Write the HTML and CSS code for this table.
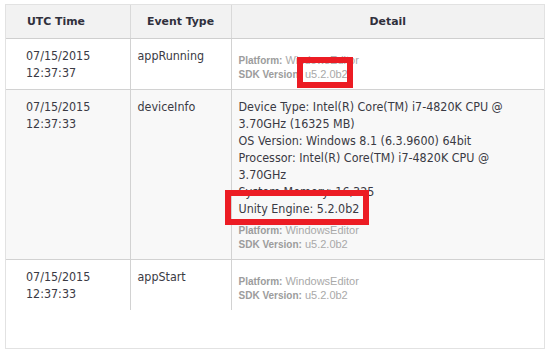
FILE: index.html
```html
<!DOCTYPE html>
<html>
<head>
<meta charset="utf-8">
<link rel="stylesheet" href="styles.css">
</head>
<body>
<div class="panel">
  <table class="events">
    <thead>
      <tr>
        <th class="c-time">UTC Time</th>
        <th class="c-type">Event Type</th>
        <th class="c-detail">Detail</th>
      </tr>
    </thead>
    <tbody>
      <tr>
        <td class="c-time">07/15/2015<br>12:37:37</td>
        <td class="c-type">appRunning</td>
        <td class="c-detail">
          <div class="meta">
            <div><b>Platform:</b> WindowsEditor</div>
            <div><b>SDK Version:</b> <span class="mark mark-sdk">u5.2.0b2</span></div>
          </div>
        </td>
      </tr>
      <tr class="alt">
        <td class="c-time">07/15/2015<br>12:37:33</td>
        <td class="c-type">deviceInfo</td>
        <td class="c-detail">
          <div class="info">
            <div>Device Type: Intel(R) Core(TM) i7-4820K CPU @ 3.70GHz (16325 MB)</div>
            <div>OS Version: Windows 8.1 (6.3.9600) 64bit</div>
            <div>Processor: Intel(R) Core(TM) i7-4820K CPU @ 3.70GHz</div>
            <div>System Memory: 16,325</div>
            <div><span class="mark mark-engine">Unity Engine: 5.2.0b2</span></div>
          </div>
          <div class="meta">
            <div><b>Platform:</b> WindowsEditor</div>
            <div><b>SDK Version:</b> u5.2.0b2</div>
          </div>
        </td>
      </tr>
      <tr class="last">
        <td class="c-time">07/15/2015<br>12:37:33</td>
        <td class="c-type">appStart</td>
        <td class="c-detail">
          <div class="meta">
            <div><b>Platform:</b> WindowsEditor</div>
            <div><b>SDK Version:</b> u5.2.0b2</div>
          </div>
        </td>
      </tr>
    </tbody>
  </table>
</div>
</body>
</html>
```

FILE: styles.css
```css
html, body {
  margin: 0;
  padding: 0;
  background: #ffffff;
}

body {
  padding: 4px 0 0 5px;
  font-family: "DejaVu Sans Condensed", "DejaVu Sans", sans-serif;
  font-stretch: condensed;
  color: #3a3a44;
}

.panel {
  width: 538px;
  height: 343px;
  border: 1px solid #e2e2e2;
}

.events {
  border-collapse: collapse;
  width: 538px;
  table-layout: fixed;
}

.events th,
.events td {
  box-sizing: border-box;
}

.events th {
  background: #f2f2f2;
  height: 33px;
  font-family: "DejaVu Sans", sans-serif;
  font-stretch: normal;
  font-size: 10.9px;
  font-weight: bold;
  color: #30303c;
  text-align: center;
  border-bottom: 1px solid #cfcfcf;
  border-left: 1px solid #d9d9d9;
  padding: 0;
}

.events th:first-child {
  border-left: none;
  text-align: left;
  padding-left: 21px;
}

.events td {
  vertical-align: top;
  font-size: 12.4px;
  line-height: 17px;
  padding: 8px 7px 8px 7px;
  border-left: 1px solid #d2d2d2;
  border-bottom: 1px solid #d2d2d2;
}

.events td:first-child {
  border-left: none;
  padding-left: 20px;
}

.events .c-time { width: 124px; }
.events .c-type { width: 101px; }

.events tr.alt td {
  background: #f8f8f8;
}

.events tr.last td {
  border-bottom: none;
}

.meta {
  margin-top: 6px;
  font-family: "Liberation Sans", Arial, sans-serif;
  font-stretch: normal;
  font-size: 11px;
  line-height: 14px;
  color: #a9a9a9;
}

.meta b {
  font-size: 10px;
  line-height: 1;
  color: #9c9c9c;
}

.mark {
  position: relative;
}

.mark::after {
  content: "";
  position: absolute;
  border: 6px solid #ec1c24;
}

.mark-sdk::after {
  left: -8px;
  right: -5px;
  top: -11px;
  bottom: -8px;
}

.mark-engine::after {
  left: -14px;
  right: -10px;
  top: -11px;
  bottom: -9px;
}
```
